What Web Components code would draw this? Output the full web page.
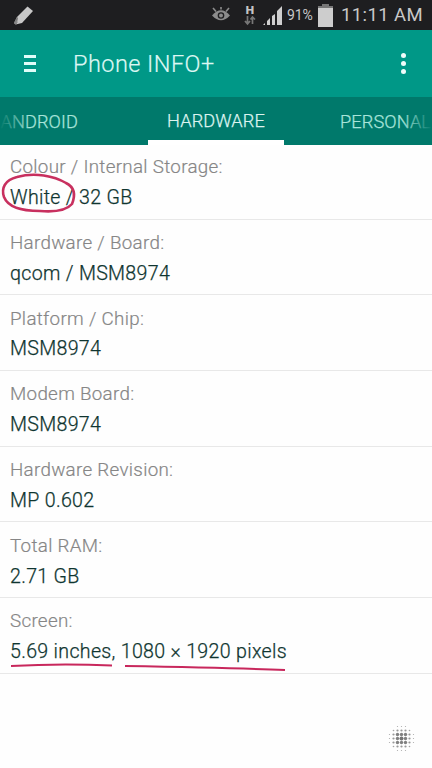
<!DOCTYPE html>
<html><head><meta charset="utf-8">
<style>
html,body{margin:0;padding:0;background:#fefefe;font-family:Roboto,"Liberation Sans",sans-serif}
body{width:432px;height:768px;overflow:hidden;position:relative;display:flex;flex-direction:column}
</style></head><body>
<status-bar></status-bar>
<app-bar></app-bar>
<tab-strip></tab-strip>
<info-list>
<info-row label="Colour / Internal Storage:" value="White / 32 GB" mark="circle"></info-row>
<info-row label="Hardware / Board:" value="qcom / MSM8974"></info-row>
<info-row label="Platform / Chip:" value="MSM8974"></info-row>
<info-row label="Modem Board:" value="MSM8974"></info-row>
<info-row label="Hardware Revision:" value="MP 0.602"></info-row>
<info-row label="Total RAM:" value="2.71 GB"></info-row>
<info-row label="Screen:" value="5.69 inches, 1080 × 1920 pixels" mark="under"></info-row>
</info-list>
<dot-grid></dot-grid>
<script>
const def=(name,html,init)=>customElements.define(name,class extends HTMLElement{
  constructor(){super();this.attachShadow({mode:'open'}).innerHTML=typeof html==='function'?html(this):html;}
  connectedCallback(){init&&init(this)}
});
def('status-bar',`<style>
:host{display:flex;align-items:center;height:30px;background:#1e1e20;color:#c9c9c9;padding:0 9px 0 13px;box-sizing:border-box;flex:none}
svg{display:block;flex:none;overflow:visible}
.sp{flex:1}
.pct{font-size:14px;margin-left:4px;letter-spacing:-.1px;width:26px;white-space:nowrap}
.time{font-size:18.500px;margin-left:8px;letter-spacing:.4px;white-space:nowrap;font-weight:400}
.h{display:flex;flex-direction:column;align-items:center;width:12px;margin-left:13px;margin-right:7px}
.h b{font:700 11px/10px "DejaVu Sans",sans-serif;color:#c4c4c4;}
</style>
<svg width="21" height="20" viewBox="0 0 21 20"><path d="M14.500 1.500 20 6 9 18 2.500 19.500 1 18 4 12Z" fill="#c8c8c8"/><path d="M1 18 4 12 5 13 3.500 19.500Z" fill="#777"/><path d="M1.500 18.500 3 15 5 17.500Z" fill="#8a8a8a"/></svg>
<span class="sp"></span>
<svg width="20" height="14" viewBox="0 0 20 14"><path d="M1 7.500Q10-3 19 7.500Q10 17 1 7.500Z" fill="#8c8c8c"/><circle cx="10" cy="7.500" r="3.300" fill="#1e1e20"/><circle cx="10" cy="7.500" r="2" fill="#8c8c8c"/><path d="M2 0 5 3.500M18 0 15 3.500M10-1V1.500" stroke="#8c8c8c" stroke-width="1.600"/></svg>
<span class="h"><b>H</b><svg width="12" height="9" viewBox="0 0 12 9"><path d="M3.500 0V7M1 5 3.500 8 6 5M8.500 8V1M6.500 3.500 8.500 1 11 3.500" stroke="#777" stroke-width="1.700" fill="none"/></svg></span>
<svg width="20" height="20" viewBox="0 0 20 20" style="margin-top:-1px"><path d="M0 20H2V18L0 20ZM4 20H7V13L4 16ZM9 20H12V9L9 11ZM14 20H19V1L14 6Z" fill="#cfcfcf"/></svg>
<span class="pct">91%</span>
<svg width="15" height="23" viewBox="0 0 15 23" style="margin-left:5px"><path d="M4.500 0H10.500V2H15V23H0V2H4.500Z" fill="#cdcdcd"/><path d="M4.500 0H10.500V2H15V4H0V2H4.500Z" fill="#777"/></svg>
<span class="time">11:11 AM</span>`);
def('app-bar',`<style>
:host{display:flex;align-items:center;height:67px;background:#009887;color:#e2fbf7;flex:none;box-sizing:border-box;padding:0 26px 0 24px}
.m{width:12px;display:flex;flex-direction:column;gap:3.500px;margin-right:37px}
.m i{display:block;height:3.500px;background:#dffdf9}
.t{font-size:23.500px;flex:1;letter-spacing:.45px;line-height:1;margin-top:2px;color:#dcf7f3;font-weight:300;-webkit-text-stroke:.2px #dcf7f3}
.d{display:flex;flex-direction:column;gap:2.500px}
.d i{display:block;width:5.500px;height:5.500px;border-radius:50%;background:#f0fcfa}
</style>
<div class="m"><i></i><i></i><i></i></div><div class="t">Phone INFO+</div><div class="d"><i></i><i></i><i></i></div>`);
def('tab-strip',`<style>
:host{display:grid;grid-template-columns:148px 136px 148px;height:48px;background:#00796b;flex:none;position:relative;overflow:hidden;font-size:18.200px;color:#a8e4da;line-height:1}
div{display:flex;align-items:center;padding-top:3px;white-space:nowrap;box-sizing:border-box;letter-spacing:.1px;font-weight:300;-webkit-text-stroke:.25px currentColor}
.l{justify-content:flex-end;padding-right:70px}
.c{justify-content:center;border-bottom:5px solid #fff;padding-top:5px;color:#ddf3ef}
.r{padding-left:56px}
.f{position:absolute;top:0;bottom:0;width:30px;pointer-events:none}
.fl{left:0;background:linear-gradient(90deg,#00796b 0,rgba(0,121,107,0) 100%)}
.fr{right:0;background:linear-gradient(270deg,#00796b 0,rgba(0,121,107,0) 100%)}
</style>
<div class="l">ANDROID</div><div class="c">HARDWARE</div><div class="r">PERSONAL</div>
<span class="f fl"></span><span class="f fr"></span>`);
def('info-list',`<style>:host{display:flex;flex-direction:column;flex:none}</style><slot></slot>`);
def('info-row',h=>{
 const m=h.getAttribute('mark');
 let o='';
 if(m==='circle')o=`<svg class="o" width="80" height="44" viewBox="0 0 80 44" style="left:0;top:26px"><path d="M17 6C35 1 54 5 66 12C74 16 76 23 72 33C66 40 52 41 40 40C22 40 8 36 4 26C1 17 5 9 17 6" fill="none" stroke="#c8305f" stroke-width="2.600"/></svg>`;
 if(m==='under')o=`<svg class="o" width="300" height="14" viewBox="0 0 300 14" style="left:0;top:62px"><path d="M11 6C45 4 80 4 112 5.500" fill="none" stroke="#c8275c" stroke-width="2"/><path d="M125 6C180 7 235 8 285 10" fill="none" stroke="#c8275c" stroke-width="2"/></svg>`;
 return `<style>
:host{display:block;height:75.700px;box-sizing:border-box;padding:13.300px 10px 0;border-bottom:1px solid #e8e8e8;position:relative;white-space:nowrap}
:host(:first-child){height:74.700px;padding-top:11.500px}
:host(:first-child) .b{margin-top:9.300px}
.a{font-size:18.800px;color:#868686;line-height:21px;letter-spacing:.3px;font-weight:300;-webkit-text-stroke:.2px #868686}
.b{font-size:19.600px;color:#0f3530;line-height:22px;margin-top:8.800px;letter-spacing:.31px;font-weight:300;-webkit-text-stroke:.25px #0f3530}
.o{position:absolute;display:block}
</style><div class="a">${h.getAttribute('label')}</div><div class="b">${h.getAttribute('value')}</div>${o}`;
});
def('dot-grid',()=>{
 let c='';
 const r=[[0,0,.6,.6,.6,0,0],[0,.8,1.1,1.1,1.1,.8,0],[.6,1.1,1.7,1.7,1.7,1.1,.6],[.6,1.1,1.7,2,1.7,1.1,.6],[.6,1.1,1.7,1.7,1.7,1.1,.6],[0,.8,1.1,1.1,1.1,.8,0],[0,0,.6,.6,.6,0,0]];
 r.forEach((row,y)=>row.forEach((s,x)=>{if(s)c+=`<circle cx="${x*4+1.5}" cy="${y*4+1.5}" r="${s}" fill="#666" opacity="${.4+s*.25}"/>`}));
 return `<style>:host{position:absolute;left:388px;top:725px;width:27px;height:27px;display:block}svg{display:block;filter:blur(.4px)}</style><svg width="27" height="27" viewBox="0 0 27 27">${c}</svg>`;
});
</script>
</body></html>
